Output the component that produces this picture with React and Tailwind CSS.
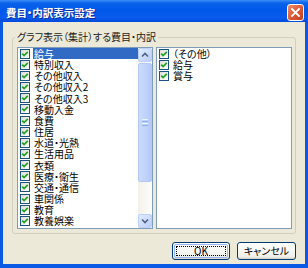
import React from "react";

const FONT = "font-['Noto_Sans_CJK_JP',sans-serif] [font-feature-settings:'palt']";

const leftItems = [
  "給与",
  "特別収入",
  "その他収入",
  "その他収入2",
  "その他収入3",
  "移動入金",
  "食費",
  "住居",
  "水道・光熱",
  "生活用品",
  "衣類",
  "医療・衛生",
  "交通・通信",
  "車関係",
  "教育",
  "教養娯楽",
];
const rightItems = ["（その他）", "給与", "賞与"];

function Check() {
  return (
    <span className="w-[10px] h-[10px] shrink-0 border border-[#1C5180] bg-[linear-gradient(135deg,#dcdcd7_0%,#f2f2ee_60%,#ffffff_100%)] flex items-center justify-center">
      <svg width="8" height="8" viewBox="0 0 8 8">
        <path d="M1.2 3.6 L3.1 5.6 L6.8 1.8" fill="none" stroke="#21A121" strokeWidth="1.7" />
      </svg>
    </span>
  );
}

function Row({ label, selected }) {
  return (
    <div className="h-[11.17px] flex items-center pl-[2px]">
      <Check />
      <span
        className={
          "ml-[3px] flex-1 h-full pl-[1px] text-[10px] leading-[11.17px] whitespace-nowrap " +
          (selected ? "bg-[#316AC5] text-white" : "text-black")
        }
      >
        {label}
      </span>
    </div>
  );
}

function Arrow({ up }) {
  return (
    <svg width="8" height="6" viewBox="0 0 8 6">
      <path
        d={up ? "M1 4.5 L4 1.5 L7 4.5" : "M1 1.5 L4 4.5 L7 1.5"}
        fill="none"
        stroke="#4D6185"
        strokeWidth="1.6"
      />
    </svg>
  );
}

function ScrollBar() {
  return (
    <div className="w-[14px] h-full flex flex-col bg-[linear-gradient(90deg,#f3f1ea,#fdfdfa)]">
      <div className="h-[14px] shrink-0 rounded-[2px] border border-[#bdd0fa] bg-[linear-gradient(135deg,#e2ebfe,#bccffa)] flex items-center justify-center">
        <Arrow up />
      </div>
      <div className="h-[119px] shrink-0 mt-[1px] rounded-[2px] border border-[#b3c9f7] bg-[linear-gradient(90deg,#cbdafc,#bfd2fb_60%,#b5c9f6)] flex flex-col items-center justify-center gap-[1px]">
        <span className="w-[6px] h-[1px] bg-[#eef4fe]" />
        <span className="w-[6px] h-[1px] bg-[#8cb0f8]" />
        <span className="w-[6px] h-[1px] bg-[#eef4fe]" />
        <span className="w-[6px] h-[1px] bg-[#8cb0f8]" />
      </div>
      <div className="flex-1" />
      <div className="h-[14px] shrink-0 rounded-[2px] border border-[#bdd0fa] bg-[linear-gradient(135deg,#e2ebfe,#bccffa)] flex items-center justify-center">
        <Arrow />
      </div>
    </div>
  );
}

export default function App() {
  return (
    <div className={"w-[308px] h-[268px] flex flex-col bg-[#0a5ae6] overflow-hidden " + FONT}>
      {/* title bar */}
      <div className="h-[22px] shrink-0 flex items-center justify-between pt-[3px] pl-[6px] pr-[4px] bg-[linear-gradient(180deg,#3d8ef6_0%,#0b62ea_14%,#0058e8_45%,#0a5ced_80%,#0049dc_100%)]">
        <span className="text-white font-bold text-[10.5px] leading-[14px] [text-shadow:1px_1px_0_#0a2a9b]">
          費目・内訳表示設定
        </span>
        <div className="w-[17px] h-[17px] rounded-[3px] border border-white bg-[linear-gradient(135deg,#ee8c6e,#dd5a37_50%,#c1401d)] flex items-center justify-center">
          <svg width="11" height="11" viewBox="0 0 11 11">
            <path d="M2 2 L9 9 M9 2 L2 9" stroke="white" strokeWidth="1.8" strokeLinecap="square" />
          </svg>
        </div>
      </div>

      {/* body */}
      <div className="flex-1 mx-[3px] mb-[4px] bg-[#ECE9D8] flex flex-col">
        <fieldset className="mt-[9px] mx-[9px] border border-[#D0D0BF] rounded-[3px] pl-[4px] pr-[3px] pt-[4px] pb-[4px]">
          <legend className="ml-[-2px] px-[2px] text-[10px] leading-[12px] text-[#1a1a1a]">
            グラフ表示（集計）する費目・内訳
          </legend>
          <div className="flex gap-[3px]">
            <div className="w-[136px] h-[182px] border border-[#7F9DB9] bg-white flex">
              <div className="flex-1 flex flex-col overflow-hidden">
                {leftItems.map((t, i) => (
                  <Row key={t} label={t} selected={i === 0} />
                ))}
              </div>
              <ScrollBar />
            </div>
            <div className="w-[136px] h-[182px] border border-[#7F9DB9] bg-white flex flex-col">
              {rightItems.map((t) => (
                <Row key={t} label={t} />
              ))}
            </div>
          </div>
        </fieldset>

        <div className="mt-[8px] mr-[9px] flex justify-end gap-[7px]">
          <button className="w-[58px] h-[18px] rounded-[3px] border border-[#003C74] bg-[linear-gradient(180deg,#ffffff,#f0f0ea_85%,#d6d0c5)] p-[1px]">
            <div className="w-full h-full rounded-[2px] border border-[#9bb6f0] flex items-center justify-center">
              <div className="w-[calc(100%-2px)] h-[calc(100%-2px)] border border-dotted border-black flex items-center justify-center text-[10px] leading-[10px] text-black">
                OK
              </div>
            </div>
          </button>
          <button className="w-[59px] h-[18px] rounded-[3px] border border-[#003C74] bg-[linear-gradient(180deg,#ffffff,#f0f0ea_85%,#d6d0c5)] flex items-center justify-center text-[10px] leading-[10px] text-black">
            キャンセル
          </button>
        </div>
      </div>
    </div>
  );
}
